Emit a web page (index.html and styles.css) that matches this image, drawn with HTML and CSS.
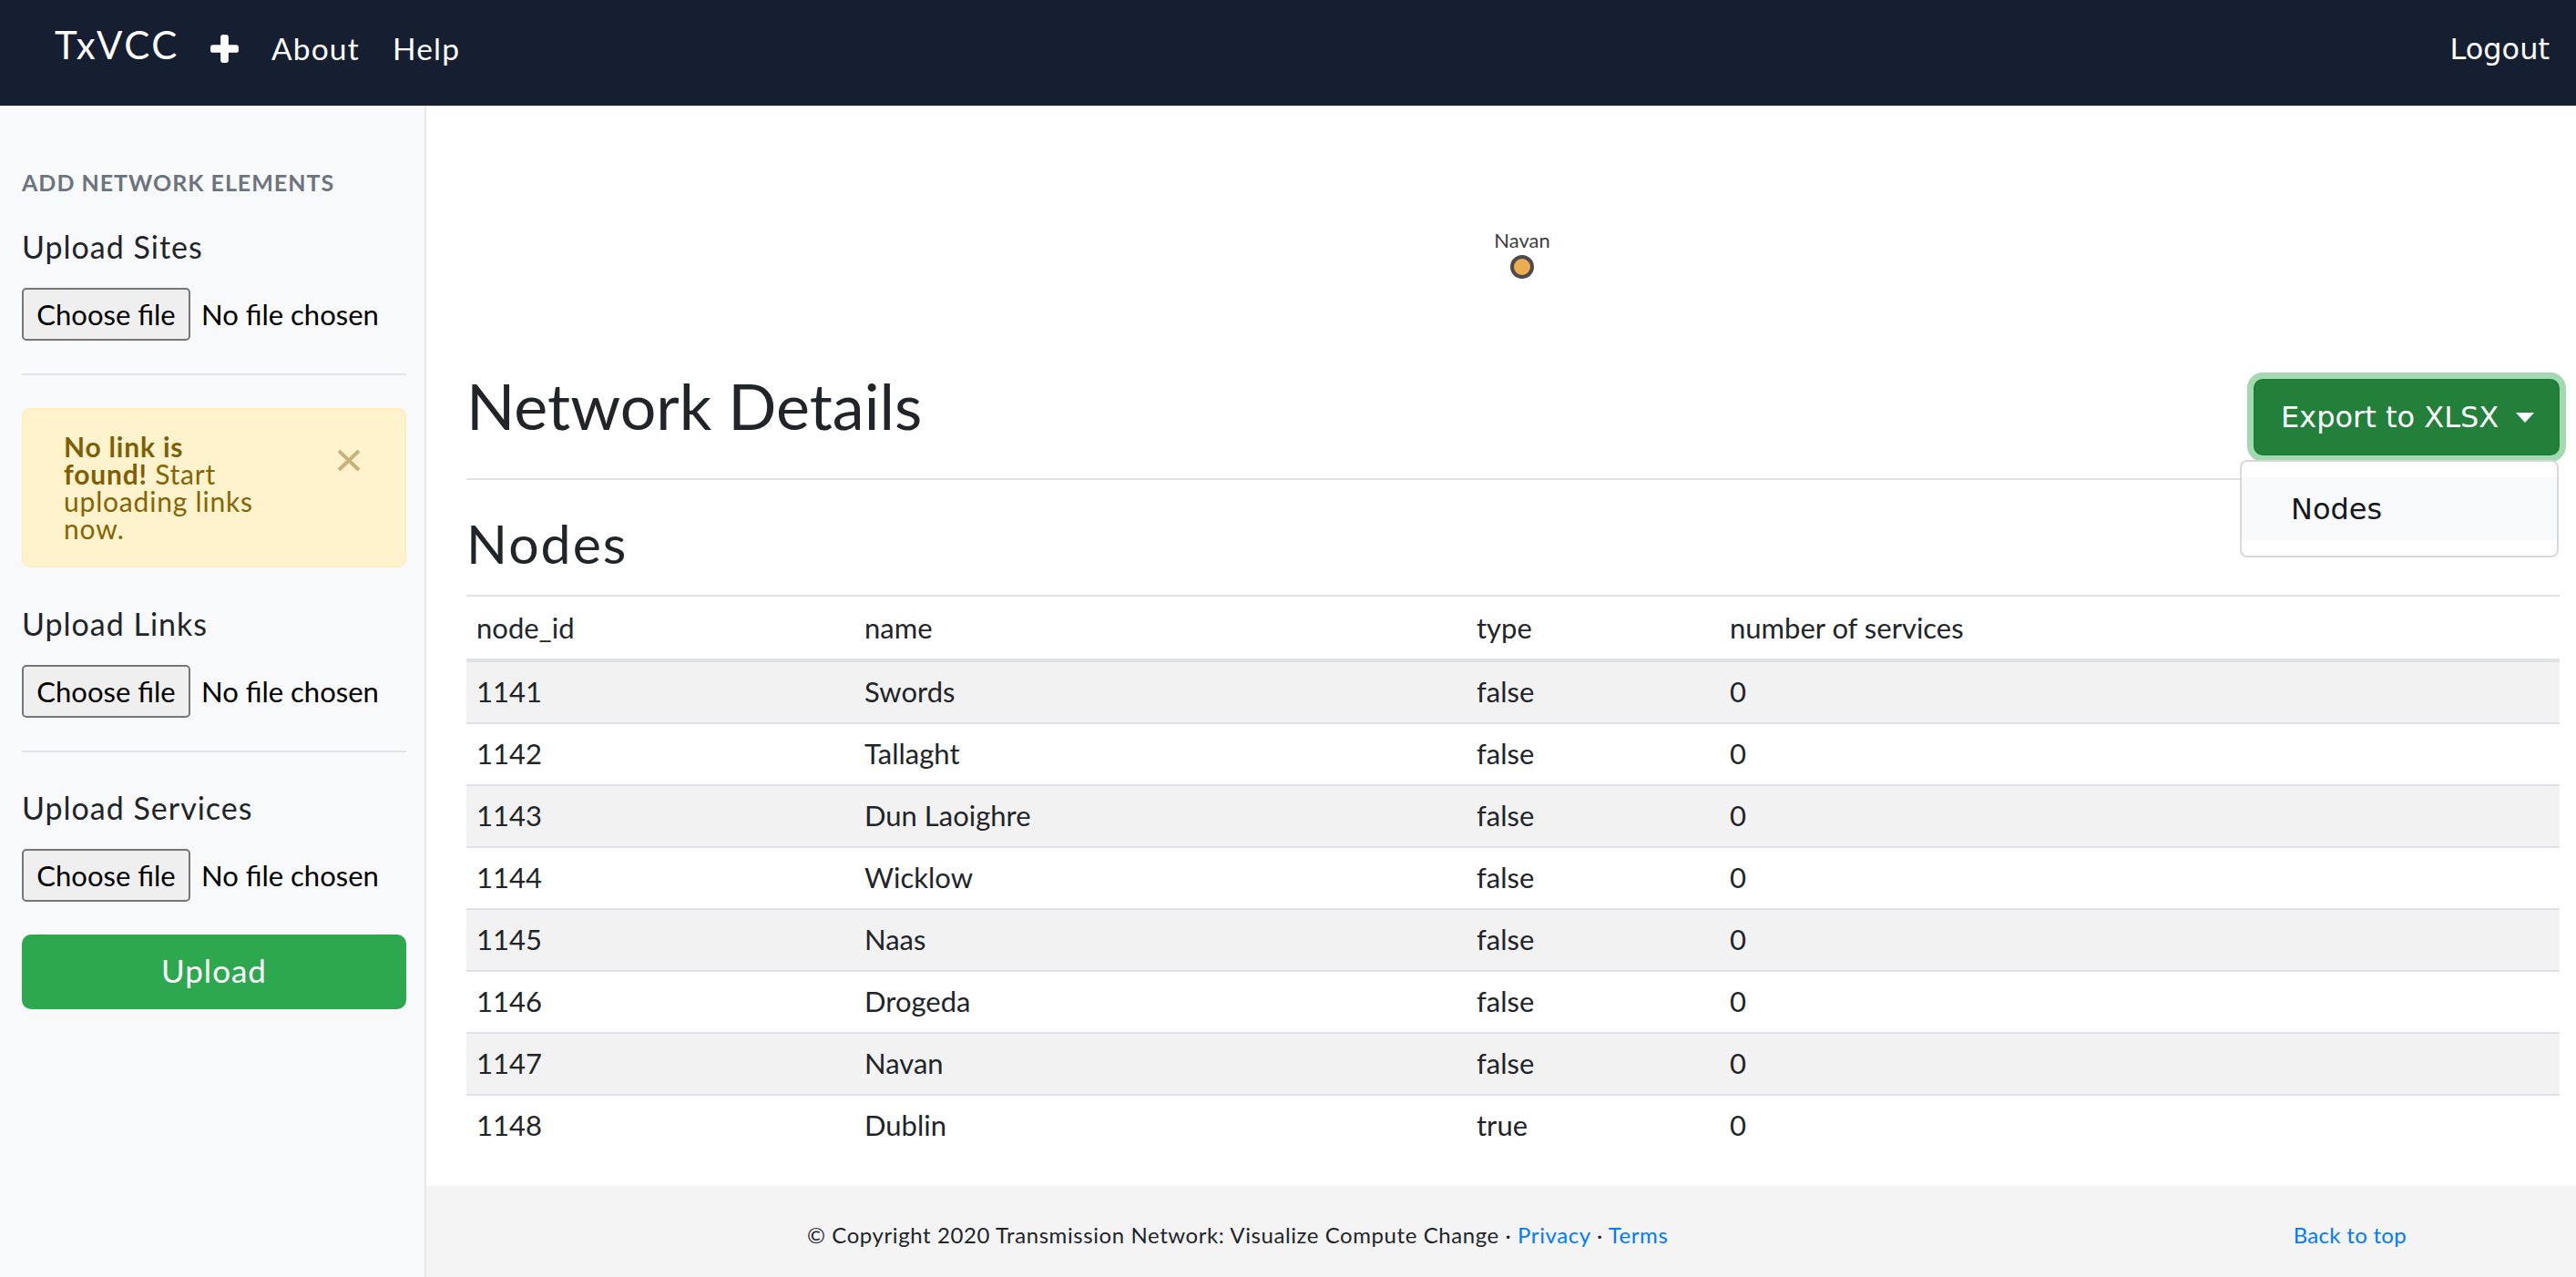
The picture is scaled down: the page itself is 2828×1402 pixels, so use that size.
FILE: index.html
```html
<!DOCTYPE html>
<html lang="en">
<head>
<meta charset="utf-8">
<title>TxVCC</title>
<link rel="stylesheet" href="styles.css">
</head>
<body>
<header class="navbar">
  <a class="brand">TxVCC</a>
  <a class="nav-icon" aria-label="Add">
    <svg width="31" height="31" viewBox="0 0 32 32"><rect x="0" y="11.5" width="32" height="9" rx="3" fill="#fff"/><rect x="11.5" y="0" width="9" height="32" rx="3" fill="#fff"/></svg>
  </a>
  <a class="nav-link">About</a>
  <a class="nav-link">Help</a>
  <a class="nav-link logout">Logout</a>
</header>
<div class="layout">
  <aside class="sidebar">
    <h6 class="side-heading">ADD NETWORK ELEMENTS</h6>
    <h5 class="upload-title first">Upload Sites</h5>
    <div class="file"><span class="file-btn">Choose file</span><span class="file-name">No file chosen</span></div>
    <hr class="side-rule">
    <div class="alert">
      <p class="alert-text"><strong>No link is<br>found!</strong> Start<br>uploading links<br>now.</p>
      <span class="alert-close"><svg width="26" height="25" viewBox="0 0 26 25"><path d="M2 2 L24 23 M24 2 L2 23" stroke="#c9b27c" stroke-width="4"/></svg></span>
    </div>
    <h5 class="upload-title after-alert">Upload Links</h5>
    <div class="file"><span class="file-btn">Choose file</span><span class="file-name">No file chosen</span></div>
    <hr class="side-rule">
    <h5 class="upload-title after-rule">Upload Services</h5>
    <div class="file"><span class="file-btn">Choose file</span><span class="file-name">No file chosen</span></div>
    <button class="btn-upload">Upload</button>
  </aside>
  <div class="main-col">
    <main class="content">
      <svg class="graph" width="100%" height="287">
        <text x="1159" y="156" class="node-label" text-anchor="middle">Navan</text>
        <circle cx="1159" cy="177" r="11" fill="#efab4f" stroke="#4b4b4b" stroke-width="4"/>
      </svg>
      <div class="page-head">
        <h2 class="page-title">Network Details</h2>
        <div class="export">
          <button class="btn-export">Export to XLSX<span class="caret"></span></button>
          <div class="menu"><a class="menu-item">Nodes</a></div>
        </div>
      </div>
      <h3 class="section-title">Nodes</h3>
      <table class="nodes">
        <thead>
          <tr><th class="c-id">node_id</th><th class="c-name">name</th><th class="c-type">type</th><th class="c-svc">number of services</th></tr>
        </thead>
        <tbody>
          <tr><td>1141</td><td>Swords</td><td>false</td><td>0</td></tr>
          <tr><td>1142</td><td>Tallaght</td><td>false</td><td>0</td></tr>
          <tr><td>1143</td><td>Dun Laoighre</td><td>false</td><td>0</td></tr>
          <tr><td>1144</td><td>Wicklow</td><td>false</td><td>0</td></tr>
          <tr><td>1145</td><td>Naas</td><td>false</td><td>0</td></tr>
          <tr><td>1146</td><td>Drogeda</td><td>false</td><td>0</td></tr>
          <tr><td>1147</td><td>Navan</td><td>false</td><td>0</td></tr>
          <tr><td>1148</td><td>Dublin</td><td>true</td><td>0</td></tr>
        </tbody>
      </table>
    </main>
    <footer class="footer">
      <p class="copy">© Copyright 2020 Transmission Network: Visualize Compute Change · <a class="link">Privacy</a> · <a class="link">Terms</a></p>
      <a class="link back">Back to top</a>
    </footer>
  </div>
</div>
</body>
</html>
```
FILE: styles.css
```css
* { box-sizing: border-box; }
html, body { margin: 0; padding: 0; }
body {
  font-family: Lato, "Noto Sans", sans-serif;
  color: #212529;
  background: #fff;
}
a { text-decoration: none; cursor: pointer; }

/* navbar */
.navbar {
  height: 116px;
  background: #161e31;
  display: flex;
  align-items: center;
  padding: 0 29px 0 60px;
}
.brand {
  color: #fff;
  font-size: 42px;
  line-height: 50px;
  letter-spacing: 2.6px;
  margin-bottom: 18px;
}
.nav-icon {
  display: flex;
  margin-left: 34px;
  margin-bottom: 10px;
}
.nav-link {
  color: #fff;
  font-size: 33.5px;
  line-height: 40px;
  letter-spacing: 1.2px;
  margin-left: 36px;
  margin-bottom: 10px;
}
.nav-link.logout {
  margin-left: auto;
  font-family: "DejaVu Sans", sans-serif;
  font-size: 32px;
  letter-spacing: 0;
  margin-bottom: 9px;
}

/* layout */
.layout {
  display: flex;
  min-height: calc(100vh - 116px);
}
.sidebar {
  width: 468px;
  flex: none;
  background: #f8f9fa;
  border-right: 2px solid #e6e7e8;
  padding: 69px 20px 40px 24px;
  display: flex;
  flex-direction: column;
  align-items: stretch;
}
.side-heading {
  margin: 0;
  font-size: 25px;
  line-height: 30px;
  font-weight: 700;
  letter-spacing: 1px;
  color: #6c757d;
}
.upload-title {
  margin: 0;
  font-size: 34px;
  line-height: 41px;
  font-weight: 400;
  letter-spacing: 1px;
  color: #212529;
}
.upload-title.first { margin-top: 35px; }
.upload-title.after-alert { margin-top: 41px; }
.upload-title.after-rule { margin-top: 40px; }
.file {
  display: flex;
  align-items: center;
  margin-top: 25px;
  height: 58px;
}
.file-btn {
  height: 58px;
  width: 185px;
  display: flex;
  align-items: center;
  justify-content: center;
  background: #efefef;
  border: 2px solid #767676;
  border-radius: 5px;
  font-size: 31px;
  color: #000;
}
.file-name {
  margin-left: 12px;
  font-size: 31px;
  color: #000;
}
.side-rule {
  margin: 36px 0 0;
  border: 0;
  border-top: 2px solid #e1e4e7;
  height: 0;
}
.alert {
  position: relative;
  margin-top: 36px;
  height: 175px;
  background: #fff3cd;
  border: 2px solid #ffeeba;
  border-radius: 9px;
  padding: 25px 60px 0 44px;
}
.alert-text {
  margin: 0;
  font-size: 30px;
  line-height: 30px;
  letter-spacing: 0.8px;
  color: #856404;
}
.alert-text strong { font-weight: 700; color: #7f5f06; }
.alert-close {
  position: absolute;
  top: 43px;
  right: 48px;
  display: flex;
}
.btn-upload {
  margin-top: 36px;
  height: 82px;
  padding: 0 0 5px;
  border: 0;
  border-radius: 10px;
  background: #2ea84f;
  color: #fff;
  font-family: Lato, sans-serif;
  font-size: 35px;
  letter-spacing: 1px;
}

/* main */
.main-col {
  flex: 1;
  display: flex;
  flex-direction: column;
  min-width: 0;
}
.content {
  flex: 1;
  padding: 0 18px 33px 44px;
}
.graph { display: block; }
.node-label {
  font-family: Lato, sans-serif;
  font-size: 22px;
  fill: #3d3d3d;
}
.page-head {
  display: flex;
  justify-content: space-between;
  align-items: center;
  padding-bottom: 12px;
  border-bottom: 2px solid #dee2e6;
}
.page-title {
  margin: 0 0 26px;
  font-size: 70px;
  line-height: 84px;
  font-weight: 400;
}
.export { position: relative; }
.btn-export {
  display: flex;
  align-items: center;
  height: 84px;
  width: 336px;
  padding: 0 0 0 28px;
  border: 2px solid #1e7e34;
  border-radius: 10px;
  background: #22803a;
  color: #fff;
  font-family: "DejaVu Sans", sans-serif;
  font-size: 32px;
  box-shadow: 0 0 0 7px rgba(72, 180, 97, 0.5);
}
.caret {
  margin-left: 19px;
  width: 0;
  height: 0;
  border-top: 11px solid #fff;
  border-left: 10.5px solid transparent;
  border-right: 10.5px solid transparent;
}
.menu {
  position: absolute;
  top: calc(100% + 5px);
  right: 1px;
  width: 350px;
  height: 107px;
  padding-top: 17px;
  background: #fff;
  border: 2px solid #d9d9d9;
  border-radius: 8px;
}
.menu-item {
  display: flex;
  align-items: center;
  height: 70px;
  padding-left: 54px;
  background: #f8f9fa;
  font-family: "DejaVu Sans", sans-serif;
  font-size: 32px;
  color: #16181b;
}
.section-title {
  margin: 34px 0 21px;
  font-size: 59px;
  line-height: 71px;
  font-weight: 400;
  letter-spacing: 2px;
}
.nodes {
  width: 100%;
  border-collapse: separate;
  border-spacing: 0;
  font-size: 31px;
  line-height: 48px;
}
.nodes th {
  text-align: left;
  font-weight: 400;
  padding: 10px 11px;
  border-top: 2px solid #dee2e6;
  border-bottom: 4px solid #dee2e6;
}
.nodes td {
  padding: 8px 11px 10px;
  border-top: 2px solid #dee2e6;
}
.nodes tbody tr:first-child td { border-top: 0; }
.nodes tbody tr:nth-child(odd) td { background: #f2f2f2; }
.c-id { width: 426px; }
.c-name { width: 672px; }
.c-type { width: 278px; }

/* footer */
.footer {
  height: 100px;
  background: #f4f4f4;
  display: flex;
  align-items: center;
  justify-content: space-between;
  padding: 6px 186px 0 418px;
  font-size: 24px;
}
.copy { margin: 0; color: #212529; letter-spacing: 0.58px; }
.link { color: #007bff; }
.back { letter-spacing: 0.3px; }
```
